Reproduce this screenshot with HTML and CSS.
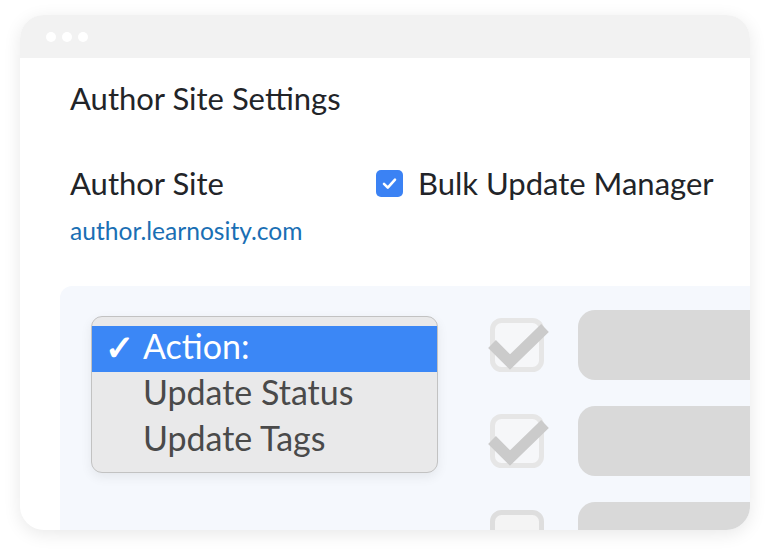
FILE: index.html
```html
<!DOCTYPE html>
<html lang="en">
<head>
    <meta charset="UTF-8">
    <meta name="viewport" content="width=device-width, initial-scale=1.0">
    <title>Author Site Settings</title>
    <link rel="stylesheet" href="styles.css">
</head>
<body>
    <div class="window">
        <div class="titlebar">
            <span class="dot"></span>
            <span class="dot"></span>
            <span class="dot"></span>
        </div>

        <div class="content">
            <h1 class="title">Author Site Settings</h1>

            <div class="site-row">
                <div class="site-info">
                    <div class="site-label">Author Site</div>
                    <a class="site-link" href="#">author.learnosity.com</a>
                </div>
                <label class="bulk">
                    <span class="bulk-box">
                        <svg width="27" height="27" viewBox="0 0 27 27">
                            <path d="M8 13.8 L11.8 17.6 L19 9.6" fill="none" stroke="#fff" stroke-width="2.6" stroke-linecap="round" stroke-linejoin="round"/>
                        </svg>
                    </span>
                    Bulk Update Manager
                </label>
            </div>

            <div class="panel">
                <div class="menu">
                    <div class="menu-item selected"><span class="tick">✓</span>Action:</div>
                    <div class="menu-item">Update Status</div>
                    <div class="menu-item">Update Tags</div>
                </div>

                <div class="list">
                    <div class="list-row">
                        <svg class="fade-check" width="60" height="54" viewBox="0 0 60 54">
                            <rect x="2.5" y="2.5" width="49" height="49" rx="9" fill="#f6f7f9" stroke="#e6e6e6" stroke-width="5"/>
                            <path d="M2 26 L20 44 L55 10" fill="none" stroke="#cbcbcb" stroke-width="11"/>
                        </svg>
                        <div class="bar"></div>
                    </div>
                    <div class="list-row">
                        <svg class="fade-check" width="60" height="54" viewBox="0 0 60 54">
                            <rect x="2.5" y="2.5" width="49" height="49" rx="9" fill="#f6f7f9" stroke="#e6e6e6" stroke-width="5"/>
                            <path d="M2 26 L20 44 L55 10" fill="none" stroke="#cbcbcb" stroke-width="11"/>
                        </svg>
                        <div class="bar"></div>
                    </div>
                    <div class="list-row">
                        <svg class="fade-check" width="60" height="54" viewBox="0 0 60 54">
                            <rect x="2.5" y="2.5" width="49" height="49" rx="9" fill="#f4f4f4" stroke="#dedede" stroke-width="5"/>
                        </svg>
                        <div class="bar"></div>
                    </div>
                </div>
            </div>
        </div>
    </div>
</body>
</html>
```

FILE: styles.css
```css
body {
    margin: 0;
    padding: 15px 20px 24px 20px;
    background-color: #fff;
    font-family: Lato, "Open Sans", sans-serif;
    color: #222428;
}
.window {
    width: 730px;
    height: 515px;
    background: #fff;
    border-radius: 24px;
    box-shadow: 0 4px 18px rgba(0,0,0,0.09);
    overflow: hidden;
    display: flex;
    flex-direction: column;
}
.titlebar {
    height: 43px;
    flex: none;
    background-color: #f2f2f2;
    display: flex;
    align-items: center;
    gap: 6px;
    padding-left: 26px;
}
.dot {
    width: 10px;
    height: 10px;
    border-radius: 50%;
    background: #fff;
}
.content {
    flex: 1;
    display: flex;
    flex-direction: column;
    padding-left: 50px;
    min-height: 0;
}
.title {
    margin: 21px 0 0 0;
    font-size: 31px;
    font-weight: 400;
    line-height: 38px;
}
.site-row {
    display: flex;
    align-items: flex-start;
    margin-top: 47px;
}
.site-info {
    width: 306px;
}
.site-label {
    font-size: 31px;
    line-height: 38px;
}
.site-link {
    display: block;
    margin-top: 14px;
    font-size: 24.6px;
    line-height: 30px;
    color: #1a6fb4;
    text-decoration: none;
}
.bulk {
    display: flex;
    align-items: center;
    gap: 15px;
    font-size: 31px;
    line-height: 38px;
}
.bulk-box {
    width: 27px;
    height: 27px;
    border-radius: 5px;
    background: #3b82f4;
    display: flex;
}
.panel {
    flex: 1;
    margin-top: 40px;
    margin-left: -10px;
    background-color: #f5f8fd;
    border-top-left-radius: 12px;
    display: flex;
    padding-left: 31px;
    min-height: 0;
}
.menu {
    margin-top: 30px;
    width: 347px;
    height: 157px;
    box-sizing: border-box;
    border: 1px solid #c2c2c2;
    border-radius: 11px;
    background: #e9e9ea;
    padding: 9px 0;
    box-shadow: 0 4px 12px rgba(0,0,0,0.07);
    flex: none;
}
.menu-item {
    height: 46px;
    line-height: 40px;
    padding-left: 51px;
    font-size: 34px;
    color: #4a4a4a;
    position: relative;
}
.menu-item.selected {
    background: #3b87f6;
    color: #fff;
}
.tick {
    position: absolute;
    left: 13px;
    font-size: 35px;
    font-weight: 700;
}
.list {
    margin-top: 24px;
    margin-left: 52px;
    display: flex;
    flex-direction: column;
    gap: 26px;
    flex: 1;
}
.list-row {
    display: flex;
    align-items: center;
    height: 70px;
    flex: none;
}
.fade-check {
    overflow: visible;
    flex: none;
}
.bar {
    margin-left: 28px;
    flex: 1;
    height: 70px;
    border-radius: 17px 0 0 17px;
    background: #d9d9d9;
}
```
